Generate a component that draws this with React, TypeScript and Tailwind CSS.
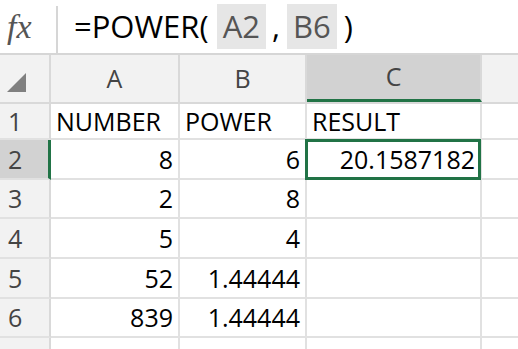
import React from "react";

const font = { fontFamily: '"Open Sans", "Noto Sans", sans-serif' };

type Row = { n: string; a: string; b: string; c: string; h: string };

const rows: Row[] = [
  { n: "1", a: "NUMBER", b: "POWER", c: "RESULT", h: "h-[36px]" },
  { n: "2", a: "8", b: "6", c: "20.1587182", h: "h-[40px]" },
  { n: "3", a: "2", b: "8", c: "", h: "h-[39px]" },
  { n: "4", a: "5", b: "4", c: "", h: "h-[40px]" },
  { n: "5", a: "52", b: "1.44444", c: "", h: "h-[40px]" },
  { n: "6", a: "839", b: "1.44444", c: "", h: "h-[39px]" },
  { n: "", a: "", b: "", c: "", h: "h-[20px]" },
];

const isNum = (s: string) => /^[0-9.]+$/.test(s);

export default function App() {
  return (
    <div className="w-[518px] h-[349px] overflow-hidden bg-white text-black" style={font}>
      {/* formula bar */}
      <div className="flex h-[55px] items-stretch border-b-2 border-[#d6d6d6]">
        <div className="w-[56px] flex items-center pl-[7px] pt-[1px]">
          <span
            className="text-[34px] italic text-[#555555] leading-none"
            style={{ fontFamily: '"Liberation Serif", "DejaVu Serif", serif' }}
          >
            fx
          </span>
        </div>
        <div className="w-[2px] mt-[6px] bg-[#d6d6d6]" />
        <div className="flex items-center pl-[16px] text-[31px] leading-none whitespace-pre">
          <span>=POWER(</span>
          <span className="ml-[8px] h-[45px] flex items-center bg-[#e6e6e6] px-[6px] text-[#555555]">A2</span>
          <span className="ml-[6px]">,</span>
          <span className="ml-[7px] h-[45px] flex items-center bg-[#e6e6e6] px-[6px] text-[#555555]">B6</span>
          <span className="ml-[7px]">)</span>
        </div>
      </div>
      {/* column headers */}
      <div className="flex h-[49px] bg-[#f2f2f2] text-[25px] text-[#444444] border-b-2 border-[#d9d9d9]">
        <div className="w-[51px] shrink-0 border-r-2 border-[#d9d9d9] flex items-end pb-[10px] pl-[7px]">
          <svg width="19" height="19" viewBox="0 0 19 19">
            <polygon points="19,0 19,19 0,19" fill="#808080" />
          </svg>
        </div>
        <div className="w-[129px] shrink-0 border-r-2 border-[#d9d9d9] flex items-center justify-center">A</div>
        <div className="w-[127px] shrink-0 border-r-2 border-[#d9d9d9] flex items-center justify-center">B</div>
        <div className="w-[175px] shrink-0 border-r-2 border-[#d9d9d9] bg-[#d2d2d2] border-b-[3px] border-b-[#217346] flex items-center justify-center">
          C
        </div>
        <div className="flex-1" />
      </div>
      {rows.map((r) => {
        const sel = r.n === "2";
        return (
          <div key={r.n || "x"} className={`flex ${r.h} text-[25px] leading-none`}>
            <div
              className={`w-[51px] shrink-0 border-b-2 border-[#e1e1e1] flex items-center pl-[8px] text-[#444444] ${
                sel ? "bg-[#d2d2d2] border-r-[3px] border-r-[#217346]" : "bg-[#f2f2f2] border-r-2 border-r-[#d9d9d9]"
              }`}
            >
              {r.n}
            </div>
            <div
              className={`w-[129px] shrink-0 border-r-2 border-b-2 border-[#e1e1e1] flex items-center px-[5px] ${
                isNum(r.a) ? "justify-end" : "justify-start"
              }`}
            >
              {r.a}
            </div>
            <div
              className={`w-[127px] shrink-0 border-r-2 border-b-2 border-[#e1e1e1] flex items-center px-[5px] ${
                isNum(r.b) ? "justify-end" : "justify-start"
              }`}
            >
              {r.b}
            </div>
            <div
              className={`relative w-[175px] shrink-0 border-r-2 border-b-2 border-[#e1e1e1] flex items-center px-[5px] ${
                isNum(r.c) ? "justify-end" : "justify-start"
              }`}
            >
              {r.c}
              {sel && <div className="absolute -left-[2px] -top-[1px] -right-[1px] -bottom-[2px] border-[3px] border-[#217346]" />}
            </div>
            <div className="flex-1 border-b-2 border-[#e1e1e1]" />
          </div>
        );
      })}
    </div>
  );
}
